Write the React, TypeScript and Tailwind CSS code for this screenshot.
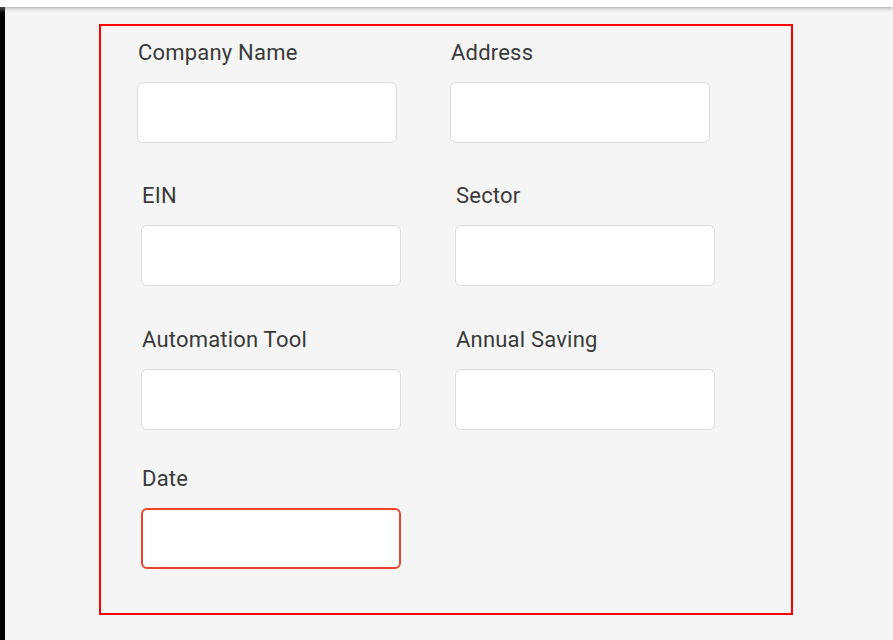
import React from "react";

function Field({ label, active }: { label: string; active?: boolean }) {
  return (
    <div className="flex w-[260px] flex-col">
      <label className="h-[30px] pl-px text-[22px] leading-[30px] tracking-[0.2px] text-[#3a3a3a]">
        {label}
      </label>
      <input
        className={
          active
            ? "mt-[14px] h-[61px] w-full rounded-[6px] border-2 border-[#e8452c] bg-white outline-none"
            : "mt-[14px] h-[61px] w-full rounded-[6px] border border-[#dcdcdc] bg-white outline-none"
        }
      />
    </div>
  );
}

export default function App() {
  return (
    <div
      className="flex h-[640px] w-full flex-col overflow-hidden bg-[#f5f5f5]"
      style={{ fontFamily: "Roboto, 'Noto Sans', sans-serif" }}
    >
      <div className="relative z-10 h-[7px] shrink-0 bg-white shadow-[0_1px_4px_rgba(0,0,0,0.35)]" />
      <div className="flex flex-1">
        <div className="w-[5px] shrink-0 bg-gradient-to-b from-[#555] to-black to-[8px]" />
        <div className="flex-1 pl-[94px] pt-[17px]">
          <div className="h-[591px] w-[694px] border-2 border-[#ff0000] pt-[12px]">
            <div className="flex gap-[53px] pl-[36px]">
              <Field label="Company Name" />
              <Field label="Address" />
            </div>
            <div className="mt-[38px] flex gap-[54px] pl-[40px]">
              <Field label="EIN" />
              <Field label="Sector" />
            </div>
            <div className="mt-[39px] flex gap-[54px] pl-[40px]">
              <Field label="Automation Tool" />
              <Field label="Annual Saving" />
            </div>
            <div className="mt-[34px] flex gap-[54px] pl-[40px]">
              <Field label="Date" active />
            </div>
          </div>
        </div>
      </div>
    </div>
  );
}
